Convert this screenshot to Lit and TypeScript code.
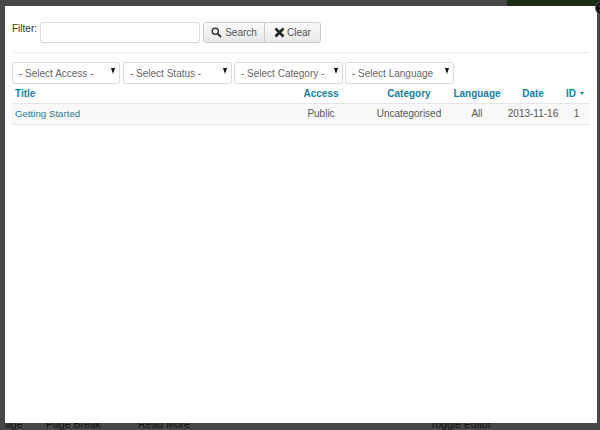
import { LitElement, html, css } from "lit";
import { customElement } from "lit/decorators.js";

@customElement("app-root")
export class AppRoot extends LitElement {
  static styles = css`
    :host { display: block; width: 600px; height: 430px; position: relative; overflow: hidden; background: #474747; font-family: "Liberation Sans", Arial, sans-serif; font-size: 10px; color: #444; }
    .page { height: 430px; display: flex; flex-direction: column; justify-content: space-between; }
    .topbar { height: 6px; display: flex; justify-content: flex-end; }
    .topbar .green { width: 93px; background: #1d2c17; }
    .bottombar { height: 12px; display: flex; color: #111; font-size: 10.5px; line-height: 12px; background: #474747; }
    .b0 { margin-left: 5px; width: 41px; }
    .b1 { width: 92px; }
    .b2 { width: 292px; }
    .modal { position: absolute; left: 5px; top: 6px; width: 592px; height: 417px; box-sizing: border-box; background: #fff; padding: 16px 7px 0 7px; }
    .close { position: absolute; left: 590px; top: -5px; width: 14px; height: 14px; border-radius: 50%; background: #111; border: 1.5px solid #555; box-sizing: border-box; display: flex; align-items: center; justify-content: center; }
    .filter { display: flex; align-items: flex-start; padding-bottom: 9px; border-bottom: 1px solid #eee; margin-right: 1px; }
    label { width: 28px; line-height: 13px; color: #333; }
    .input { width: 160px; height: 21px; box-sizing: border-box; border: 1px solid #ddd; border-radius: 2px; background: #fff; margin-right: 3px; }
    .group { display: flex; height: 21px; box-sizing: border-box; }
    button { font: inherit; font-size: 10px; color: #555; height: 21px; box-sizing: border-box; border: 1px solid #ccc; background: linear-gradient(#fbfbfb, #e8e8e8); padding: 0; display: flex; align-items: center; justify-content: center; gap: 3px; }
    .search { width: 62px; border-radius: 3px 0 0 3px; }
    .clear { width: 56px; border-left: 0; border-radius: 0 3px 3px 0; gap: 2px; }
    .selects { display: flex; gap: 2px; margin-top: 9px; }
    .sel { position: relative; width: 108px; flex: none; }
    .sel.first { margin-right: 1px; }
    .sel.w2 { width: 109px; }
    select { appearance: none; -webkit-appearance: none; width: 100%; height: 22px; display: block; box-sizing: border-box; border: 1px solid #ddd; border-radius: 2px; background: #fff; font: inherit; font-size: 10px; color: #666; padding: 0 18px 0 6px; }
    .arrow { position: absolute; right: 5px; top: 6px; width: 0; height: 0; border-left: 2.5px solid transparent; border-right: 2.5px solid transparent; border-top: 6px solid #111; }
    table { width: 578px; border-collapse: collapse; table-layout: fixed; margin-right: 1px; font-size: 10px; }
    th { height: 19px; padding: 0; font-weight: bold; color: #17809b; text-align: center; font-size: 10px; }
    th.t { text-align: left; padding-left: 3px; }
    th.last { padding-right: 3px; }
    td { height: 18px; padding: 0 0 2px; text-align: center; color: #555; background: #f9f9f9; border-top: 1px solid #e6e6e6; border-bottom: 1px solid #e6e6e6; }
    td.t { text-align: left; padding-left: 3px; }
    a { color: #1f7f91; text-decoration: none; font-size: 9.7px; }
    .sort { display: inline-block; width: 0; height: 0; margin-left: 4px; vertical-align: 2px; border-left: 2.5px solid transparent; border-right: 2.5px solid transparent; border-top: 3px solid #17809b; }
    .c1 { width: 263px; } .c2 { width: 92px; } .c3 { width: 84px; } .c4 { width: 52px; } .c5 { width: 60px; } .c6 { width: 27px; }
  `;

  render() {
    const selects = ["- Select Access -", "- Select Status -", "- Select Category -", "- Select Language -"];
    return html`
      <div class="page">
        <div class="topbar"><div class="green"></div></div>
        <div class="bottombar"><span class="b0">age</span><span class="b1">Page Break</span><span class="b2">Read More</span><span>Toggle Editor</span></div>
      </div>
      <div class="modal">
        <div class="close">
          <svg width="7" height="7" viewBox="0 0 7 7"><path d="M1 1 6 6M6 1 1 6" stroke="#fff" stroke-width="1.8"/></svg>
        </div>
        <div class="filter">
          <label>Filter:</label>
          <div class="input"></div>
          <div class="group">
            <button class="search">
              <svg width="11" height="11" viewBox="0 0 11 11"><circle cx="4.3" cy="4.3" r="3.1" fill="none" stroke="#333" stroke-width="1.4"/><path d="M6.6 6.6 10 10" stroke="#333" stroke-width="2"/></svg>
              Search
            </button>
            <button class="clear">
              <svg width="11" height="11" viewBox="0 0 11 11"><path d="M1.5 1.5 9.5 9.5M9.5 1.5 1.5 9.5" stroke="#222" stroke-width="2.6"/></svg>
              Clear
            </button>
          </div>
        </div>
        <div class="selects">
          ${selects.map((s, i) => html`<div class="sel ${i > 0 ? "w2" : "first"}"><select><option>${s}</option></select><span class="arrow"></span></div>`)}
        </div>
        <table>
          <colgroup><col class="c1"><col class="c2"><col class="c3"><col class="c4"><col class="c5"><col class="c6"></colgroup>
          <thead><tr><th class="t">Title</th><th>Access</th><th>Category</th><th>Language</th><th>Date</th><th class="last">ID<span class="sort"></span></th></tr></thead>
          <tbody><tr><td class="t"><a href="#">Getting Started</a></td><td>Public</td><td>Uncategorised</td><td>All</td><td>2013-11-16</td><td>1</td></tr></tbody>
        </table>
      </div>
    `;
  }
}
